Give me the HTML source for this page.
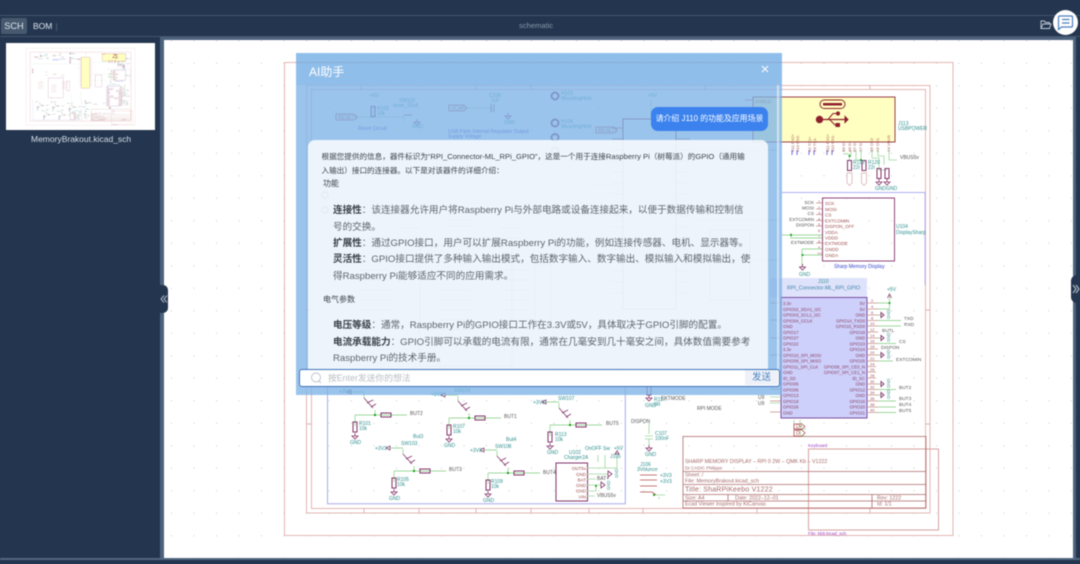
<!DOCTYPE html>
<html lang="zh"><head><meta charset="utf-8"><title>schematic</title>
<style>
html,body{margin:0;padding:0;width:1080px;height:564px;overflow:hidden;background:#24364f}
body{font-family:"Liberation Sans","Noto Sans CJK SC",sans-serif;position:relative}
.a{position:absolute;white-space:nowrap}
#wrap{position:absolute;left:0;top:0;width:1080px;height:564px;filter:blur(.4px)}
svg text{font-family:"Liberation Sans",sans-serif}
.r{fill:#a05050;font-size:5px}.t{fill:#2f8f8f;font-size:5px}.k{fill:#555;font-size:5px}.b{fill:#3344cc;font-size:5px}
.l{position:absolute;white-space:nowrap;font-size:9.6px;color:#5d646c;line-height:16px;left:333px}
.l b{color:#3a4048;font-weight:700}
.s{position:absolute;white-space:nowrap;font-size:7.6px;color:#3d4249;line-height:14px}
</style></head><body><div id="wrap">
<div class="a" style="left:0;top:15px;width:1080px;height:1px;background:#41546d"></div>
<div class="a" style="left:0;top:36px;width:1080px;height:1px;background:#41546d"></div>
<div class="a" style="left:1px;top:18px;width:26px;height:16px;background:#46596f;border-radius:2px;color:#dfe6ee;font-size:9.2px;line-height:16px;text-align:center">SCH</div>
<div class="a" style="left:33px;top:18px;color:#dfe6ee;font-size:8.5px;line-height:16px">BOM</div>
<div class="a" style="left:56px;top:23px;width:1px;height:8px;background:#46596f"></div>
<div class="a" style="left:519px;top:20px;color:#8696aa;font-size:7.6px;line-height:12px">schematic</div>
<div class="a" style="left:160px;top:37px;width:4px;height:521px;background:#4d627c"></div>
<div class="a" style="left:160px;top:37px;width:916px;height:3px;background:#4d627c"></div>
<div class="a" style="left:1073px;top:37px;width:3px;height:521px;background:#4d627c"></div>
<div class="a" style="left:0;top:558px;width:1080px;height:2px;background:#526781"></div>

<svg class="a" style="left:0;top:0" width="1080" height="564" viewBox="0 0 1080 564">
<defs>
<pattern id="dots" x="171" y="17.8" width="22.5" height="22.5" patternUnits="userSpaceOnUse"><rect width="1" height="1" fill="#c9c9c9"/></pattern>
<g id="res"><rect x="-2" y="-5" width="4" height="10" fill="none" stroke="#84346a" stroke-width="1"/></g>
<g id="hres"><rect x="-5" y="-2" width="10" height="4" fill="none" stroke="#84346a" stroke-width="1"/></g>
<g id="gnd"><path d="M0 0V3M-3 3H3L0 6Z" fill="none" stroke="#84346a" stroke-width=".8"/></g>
<g id="btn" fill="none">
<path d="M-20 0V11M-20 0H32M0 0V-5" stroke="#9ed79e" stroke-width=".9"/>
<path d="M-11 -22V-17M-24 -23H-11" stroke="#9ed79e" stroke-width=".9"/>
<path d="M-11 -17L-2 -7M-8 -12L-2 -15M-4 -8L1 -11" stroke="#84346a" stroke-width=".8"/>
<circle r="1.1" fill="#0a9a0a"/>
<use href="#hres" x="11" y="0"/><use href="#res" x="-20" y="12"/><use href="#gnd" x="-20" y="18"/>
<path d="M-28 -23L-24 -25V-21Z" stroke="#84346a" stroke-width=".7"/>
</g>
<g id="sch">
<g fill="none" stroke="#e2adad" stroke-width=".9">
<rect x="284.5" y="62.5" width="668.5" height="473"/>
<rect x="306.5" y="85.5" width="623.5" height="427.5"/>
<rect x="311.5" y="89.5" width="614" height="419"/>
<path d="M364 508V513M419 508V513M476 508V513M531 508V513M589 508V513M643 508V513M757 508V513M870 508V513M870 85V89M705 85V89M531 85V89M476 85V89M361 85V89M926 310H930M926 424H930M306 310H311M306 424H311"/>
<rect x="808.5" y="449" width="130" height="81" stroke="#d49a9a"/>
</g>
<g fill="none" stroke="#b06a6a" stroke-width=".8">
<rect x="683" y="436.5" width="243" height="71.5"/>
<path d="M683 471.5H926M683 484.500H926M683 494.500H926M683 501H926M728 494.500V501M872 494.500V508"/>
</g>
<g fill="#a76a6a" style="font-size:5.300px">
<text x="685" y="463">SHARP MEMORY DISPLAY – RPI 0 2W – QMK Kb – V1222</text>
<text x="685" y="469.500" style="font-size:4.500px">Dr CADIC Philippe</text>
<text x="685" y="476.500">Sheet: /</text><text x="685" y="482.500">File: MemoryBrakout.kicad_sch</text>
<text x="685" y="491.500" style="font-size:7px;letter-spacing:.2px">Title: ShaRPiKeebo V1222</text>
<text x="685" y="499.500">Size: A4</text><text x="735" y="499.500">Date: 2022–12–01</text><text x="877" y="499.500">Rev: 1222</text>
<text x="685" y="505.700">Ecad Viewer inspired by KiCanvas</text><text x="877" y="505.700">Id: 1/1</text>
</g>
<text x="808" y="447" fill="#a040c0" style="font-size:4.500px">Keyboard</text>
<text x="808" y="535" fill="#a040c0" style="font-size:4.500px">File: kb9.kicad_sch</text>
<!-- USB -->
<rect x="753" y="97" width="142" height="45" fill="#ffffc2" stroke="#8f2b3e" stroke-width=".9"/>
<text x="755" y="103" fill="#a05050" style="font-size:4.500px">SHIELD</text><path d="M745 100H753" stroke="#b05050" stroke-width=".7"/>
<rect x="820" y="100" width="25" height="8.500" rx="4.200" fill="none" stroke="#8f1f2c" stroke-width=".9"/>
<rect x="823" y="103" width="19" height="2.500" fill="#8f1f2c"/>
<g stroke="#8f1f2c" fill="#8f1f2c"><circle cx="819.500" cy="119.500" r="3.200"/><path d="M820 119.500H846" stroke-width="1.200"/><path d="M828 119.500L833 113.500H837M830 120L835 125H837" fill="none" stroke-width="1"/><path d="M845 116.500L848 119.500L845 122.500Z"/><circle cx="838" cy="113.500" r="1.600"/><rect x="836" y="123.500" width="3.500" height="3"/></g>
<text class="t" x="898" y="125">J113</text><text class="t" x="898" y="130">USBPOWER</text>
<g class="r" fill="#a05050" style="font-size:4px">
<text transform="translate(794,152)rotate(-90)">A11 RX2+</text><text transform="translate(799,152)rotate(-90)">A10 RX2-</text><text transform="translate(811,152)rotate(-90)">A2 TX1+</text><text transform="translate(816,152)rotate(-90)">A3 TX1-</text><text transform="translate(829,152)rotate(-90)">B11 RX1+</text><text transform="translate(834,152)rotate(-90)">B10 RX1-</text><text transform="translate(845,152)rotate(-90)">B6 D+</text><text transform="translate(851,152)rotate(-90)">A6 D+</text><text transform="translate(856,152)rotate(-90)">B7 D-</text><text transform="translate(862,152)rotate(-90)">A7 D-</text><text transform="translate(873,152)rotate(-90)">B5 CC2</text><text transform="translate(879,152)rotate(-90)">A5 CC1</text><text transform="translate(890,152)rotate(-90)">A4 VBUS</text>
</g>
<g fill="none" stroke="#9ed79e" stroke-width=".8"><path d="M843 154H849.500V161M851 150V156H849.500M856 150V160H861M861 150V160M872 150V158H879V170H887M878 150V156H884V165M889 150V160H897"/></g>
<circle cx="849.500" cy="156" r="1" fill="#0a9a0a"/><circle cx="861" cy="160" r="1" fill="#0a9a0a"/>
<use href="#res" x="849.500" y="165.500"/><use href="#res" x="864" y="165.500"/><use href="#res" x="879" y="173.500"/><use href="#res" x="887" y="173.500"/>
<use href="#gnd" x="879" y="179"/><use href="#gnd" x="887" y="179"/>
<path d="M847 173H852V183L849.500 185.500L847 183ZM861.500 173H866.500V183L864 185.500L861.500 183Z" fill="none" stroke="#d4a9a9" stroke-width=".7"/>
<text class="t" x="853" y="164">R119</text><text class="t" x="853" y="169">22r</text><text class="t" x="868" y="164">R120</text><text class="t" x="868" y="169">22r</text><text class="t" x="875" y="190">GNDGND</text><text class="k" x="900" y="159">VBUS5v</text>
<path d="M792 150V155M797 150V155M809 150V155M814 150V155M827 150V155M832 150V155" stroke="#4d4fd4" stroke-width=".8"/>
<!-- sharp -->
<path d="M782 192.500H925V285" fill="none" stroke="#aeb0f0" stroke-width=".9"/>
<rect x="822.500" y="198" width="72" height="63" fill="none" stroke="#84346a" stroke-width=".9"/>
<g class="k" style="font-size:4.700px" text-anchor="end"><text x="814" y="204">SCK</text><text x="814" y="209.500">MOSI</text><text x="814" y="215">CS</text><text x="814" y="221">EXTCOMIN</text><text x="814" y="226.500">DISPON</text><text x="814" y="244">EXTMODE</text></g>
<g class="r" style="font-size:4.600px"><text x="825" y="205">SCK</text><text x="825" y="211">MOSI</text><text x="825" y="216.500">CS</text><text x="825" y="222.500">EXTCOMIN</text><text x="825" y="228">DISPON_OFF</text><text x="825" y="234">VDDA</text><text x="825" y="239.500">VDDD</text><text x="825" y="245">EXTMODE</text><text x="825" y="251">GNDD</text><text x="825" y="257">GNDA</text></g>
<g style="font-size:4px" fill="#a05050"><text x="818" y="203">1</text><text x="818" y="209">2</text><text x="818" y="214.500">3</text><text x="818" y="220.500">4</text><text x="818" y="226">5</text><text x="818" y="232">6</text><text x="818" y="237.500">7</text><text x="818" y="243">8</text><text x="818" y="249">9</text><text x="817" y="255">10</text></g>
<path d="M816 203H822M816 209H822M816 214.500H822M816 220.500H822M816 226H822M816 243H822" stroke="#c98a8a" stroke-width=".7"/>
<path d="M782 235H822M791 233V238H822M802 249H822M802 255H822M802 249V265" fill="none" stroke="#9ed79e" stroke-width=".9"/>
<circle cx="791" cy="235" r="1" fill="#0a9a0a"/><circle cx="802.500" cy="255" r="1" fill="#0a9a0a"/>
<use href="#gnd" x="802.500" y="264"/><text class="t" x="799" y="276">GND</text>
<text x="834" y="268" class="b">Sharp Memory Display</text>
<text class="t" x="896" y="228">U104</text><text class="t" x="896" y="234">DisplaySharp</text>
<!-- J110 -->
<text x="818" y="283" class="t" style="font-size:5px">J110</text>
<text x="787" y="289.500" fill="#3e88a8" style="font-size:5.300px">RPI_Connector-ML_RPI_GPIO</text>
<rect x="781" y="297.500" width="86" height="120.500" fill="none" stroke="#7c4d9f" stroke-width="1"/>
<path d="M770 303H781M770 320H781M770 338H781M770 355H781M770 372H781M770 389H781M770 401H781M770 412H781" stroke="#c98a8a" stroke-width=".7"/>
<g fill="#8a3f60" style="font-size:4.300px">
<text x="783" y="305">3.3v</text><text x="783" y="311">GPIO02_SDA1_I2C</text><text x="783" y="316.500">GPIO03_SCL1_I2C</text><text x="783" y="322.300">GPIO04_GCLK</text><text x="783" y="328">GND</text><text x="783" y="333.800">GPIO17</text><text x="783" y="339.500">GPIO27</text><text x="783" y="345.300">GPIO22</text><text x="783" y="351">3.3v</text><text x="783" y="356.800">GPIO10_SPI_MOSI</text><text x="783" y="362.500">GPIO09_SPI_MISO</text><text x="783" y="368.300">GPIO11_SPI_CLK</text><text x="783" y="374">GND</text><text x="783" y="379.800">ID_SD</text><text x="783" y="385.500">GPIO05</text><text x="783" y="391.300">GPIO06</text><text x="783" y="397">GPIO13</text><text x="783" y="402.800">GPIO19</text><text x="783" y="408.500">GPIO26</text><text x="783" y="414.300">GND</text>
</g>
<g fill="#8a3f60" style="font-size:4.300px" text-anchor="end">
<text x="865" y="305">5V</text><text x="865" y="311">5V</text><text x="865" y="316.500">GND</text><text x="865" y="322.300">GPIO14_TXD0</text><text x="865" y="328">GPIO15_RXD0</text><text x="865" y="333.800">GPIO18</text><text x="865" y="339.500">GND</text><text x="865" y="345.300">GPIO23</text><text x="865" y="351">GPIO24</text><text x="865" y="356.800">GND</text><text x="865" y="362.500">GPIO25</text><text x="865" y="368.300">GPIO08_SPI_CE0_N</text><text x="865" y="374">GPIO07_SPI_CE1_N</text><text x="865" y="379.800">ID_SC</text><text x="865" y="385.500">GND</text><text x="865" y="391.300">GPIO12</text><text x="865" y="397">GND</text><text x="865" y="402.800">GPIO16</text><text x="865" y="408.500">GPIO20</text><text x="865" y="414.300">GPIO21</text>
</g>
<g fill="none" stroke="#c98a8a" stroke-width=".7"><path d="M867 303H878M867 309H878M867 315H878M867 320.500H878M867 326H878M867 332H878M867 338H878M867 343.500H878M867 349H878M867 355H878M867 361H878M867 366.500H876M867 372H876M867 378H876M867 384H878M867 389.500H878M867 395H878M867 401H878M867 407H878M867 412.500H878"/></g>
<g fill="none" stroke="#9ed79e" stroke-width=".9"><path d="M878 303H889.500V293M878 309H889.500V303M878 320.500H901M878 326H901M878 343.500H896M878 361H893M878 389.500H896M878 401H896M878 407H896M878 412.500H896M878 315H881M878 338H881M878 355H881M878 384H881M878 395H881"/></g>
<circle cx="889.500" cy="303" r="1" fill="#0a9a0a"/>
<path d="M889.500 294L887.500 298M889.500 294L891.500 298" stroke="#84346a" stroke-width=".8"/>
<path d="M881 312.500L884 315L881 317.500ZM881 335.500L884 338L881 340.500ZM881 352.500L884 355L881 357.500ZM881 381.500L884 384L881 386.500ZM881 392.500L884 395L881 397.500Z" fill="none" stroke="#84346a" stroke-width=".9"/>
<text class="t" x="887" y="291">+5V</text>
<g class="t" style="font-size:4.200px"><text transform="translate(890,319)rotate(-90)">GND</text><text transform="translate(890,342)rotate(-90)">GND</text><text transform="translate(890,359)rotate(-90)">GND</text><text transform="translate(890,388)rotate(-90)">GND</text><text transform="translate(890,399)rotate(-90)">GND</text></g>
<g class="k" style="font-size:4.800px"><text x="904" y="320">TXD</text><text x="904" y="326">RXD</text><text x="882" y="332">BUTL</text><text x="899" y="343">CS</text><text x="881" y="349">DISPON</text><text x="896" y="361">EXTCOMIN</text><text x="899" y="389">BUT2</text><text x="899" y="400">BUT3</text><text x="899" y="406">BUT4</text><text x="899" y="412">BUT5</text></g>
<g style="font-size:4px" fill="#a05050"><text x="871" y="302">2</text><text x="871" y="308">4</text><text x="871" y="314">6</text><text x="871" y="319.500">8</text><text x="870" y="325">10</text><text x="870" y="331">12</text><text x="870" y="337">14</text><text x="870" y="342.500">16</text><text x="870" y="348">18</text><text x="870" y="354">20</text><text x="870" y="360">22</text><text x="870" y="365.500">24</text><text x="870" y="371">26</text><text x="870" y="377">28</text><text x="870" y="383">30</text><text x="870" y="388.500">32</text><text x="870" y="394">34</text><text x="870" y="400">36</text><text x="870" y="406">38</text><text x="870" y="411.500">40</text></g>
<!-- below J110 -->
<path d="M794 420V429H806M800 420V436H806" fill="none" stroke="#9ed79e" stroke-width=".8"/>
<path d="M794 424H802L805 426.500L802 429H794ZM794 430H802L805 433L802 436H794Z" fill="none" stroke="#b05050" stroke-width=".8"/>
<text x="796" y="428" fill="#a05050" style="font-size:5px">D+</text><text x="796" y="434.500" fill="#a05050" style="font-size:5px">D-</text>
<text class="k" x="758" y="399">U9</text><text class="k" x="758" y="405">U9</text>
<path d="M770 397H781M770 403H781" stroke="#9ed79e" stroke-width=".8"/>
<text class="k" x="661" y="400">EXTMODE</text><text class="k" x="631" y="423">DISPON</text><text class="k" x="697" y="410">RPI MODE</text>
<use href="#res" x="649" y="390"/><use href="#gnd" x="649" y="395"/><text class="t" x="645" y="407">GND</text>
<text class="t" x="654" y="401">R117</text><text class="t" x="654" y="406">0R</text>
<path d="M649 422V434M645 436H653M645 439H653M649 439V445" fill="none" stroke="#9ed79e" stroke-width=".8"/><use href="#gnd" x="649" y="445"/>
<text class="t" x="655" y="435">C107</text><text class="t" x="655" y="440">100nF</text><text class="t" x="645" y="456">GND</text>
<g class="t"><text x="660" y="477">+3V3</text><text x="660" y="483">+3V3</text></g>
<text class="t" x="640" y="466">J106</text><text class="t" x="637" y="471">3Volunce</text>
<path d="M640 475H657M640 480H657M640 486H657M640 492H652L656 495" stroke="#b05050" stroke-width=".8" fill="none"/>
<circle cx="654" cy="495" r="1" fill="#0a9a0a"/><path d="M656 495H665M659 499V497" stroke="#9ed79e" stroke-width=".8"/>
<!-- button frame -->
<path d="M327.500 380V503.800H625.300V380" fill="none" stroke="#a9abee" stroke-width="1"/>
<use href="#btn" x="375" y="415"/><use href="#btn" x="469" y="418"/><use href="#btn" x="570" y="425"/><use href="#btn" x="414" y="471"/><use href="#btn" x="508" y="473"/>
<g class="t">
<text x="339" y="393">+3V3</text><text x="431" y="396">+3V3</text><text x="533" y="404">+3V3</text><text x="375" y="450">+3V3</text><text x="470" y="452">+3V3</text>
<text x="359" y="425">R101</text><text x="359" y="430">10k</text><text x="453" y="428">R107</text><text x="453" y="433">10k</text><text x="555" y="436">R113</text><text x="555" y="441">10k</text><text x="397" y="481">R105</text><text x="397" y="486">10k</text><text x="491" y="483">R109</text><text x="491" y="488">10k</text>
<text x="350" y="444">GND</text><text x="444" y="447">GND</text><text x="547" y="454">GND</text><text x="389" y="500">GND</text><text x="483" y="502">GND</text>
<text x="558" y="400">SW107</text><text x="401" y="445">SW103</text><text x="495" y="448">SW108</text><text x="413" y="438" >But3</text><text x="506" y="441">But4</text>
<text x="454" y="392">SW104</text>
</g>
<g class="k" style="font-size:5px"><text x="410" y="415">BUT2</text><text x="504" y="418">BUT1</text><text x="606" y="425">BUT5</text><text x="449" y="471">BUT3</text><text x="543" y="474">BUT4</text></g>
<!-- charger -->
<rect x="556" y="463" width="31.500" height="38" fill="none" stroke="#84346a" stroke-width="1"/>
<g fill="#a05050" style="font-size:4.500px" text-anchor="end"><text x="586" y="470">OUT5v</text><text x="586" y="476">GND</text><text x="586" y="481.500">BAT</text><text x="586" y="487">GND</text><text x="586" y="492.500">GND</text><text x="586" y="498.500">VIN</text></g>
<path d="M587 468H617V456M605 455V468M598 455V462M587 474H608M587 479H596M587 485H601M596 485V491H587M587 496H595" fill="none" stroke="#9ed79e" stroke-width=".8"/>
<path d="M608 471L612 474L608 477ZM601 482L605 485L601 488ZM615 454L617 451L619 454Z" fill="none" stroke="#84346a" stroke-width=".8"/>
<circle cx="596" cy="486" r="1" fill="#0a9a0a"/>
<text class="t" x="569" y="454">U102</text><text class="t" x="564" y="459">Charger2A</text><text class="t" x="585" y="450">OnOFF Sw</text><text class="t" x="614" y="450">+5V</text><text class="t" x="610" y="458">J105</text>
<g class="t" style="font-size:4.200px"><text transform="translate(618,478)rotate(-90)">GND</text><text transform="translate(610,490)rotate(-90)">GND</text></g>
<text class="k" x="597" y="480">BAT+</text><text class="k" x="597" y="497">VBUS5v</text>
<!-- top left under modal -->
<g stroke="#9ed79e" stroke-width=".8" fill="none"><path d="M357 117H404M373 117V108M404 117V121M465 108H492M492 108V112M651 120V100"/></g>
<use href="#res" x="373" y="111.500"/><use href="#gnd" x="417" y="119"/><use href="#gnd" x="508" y="113"/>
<path d="M336 114H354L357 117L354 120H336ZM449 105H464L467 108L464 111H449ZM596 127H614L617 130L614 133H596Z" fill="none" stroke="#b05050" stroke-width=".8"/>
<text x="338" y="119" class="r">RESET1</text><text x="451" y="110" class="r">UCAP</text><text x="598" y="132" class="r">RESET1</text>
<g class="t"><text x="370" y="97">+5V</text><text x="377" y="110">R102</text><text x="377" y="115">10k</text><text x="399" y="102">SW102</text><text x="393" y="107">reset_32u4</text><text x="489" y="97">C106</text><text x="491" y="102">1uF</text><text x="504" y="124">GND</text><text x="412" y="128">GND</text><text x="561" y="95">H103</text><text x="561" y="100">MountingHole</text><text x="561" y="123">H104</text><text x="561" y="128">MountingHole</text><text x="648" y="97">+5V</text></g>
<g class="b"><text x="358" y="130">Reset Circuit</text><text x="448" y="133">USB Pads Internal Regulator Output</text><text x="448" y="138">Supply Voltage</text></g>
<path d="M491 104V112M494 104V112M404 115H412" stroke="#84346a" stroke-width=".8"/>
<g fill="none" stroke="#84346a" stroke-width="2"><circle cx="555" cy="96" r="3.500"/><circle cx="555" cy="123" r="3.500"/><circle cx="555" cy="137.500" r="3.500"/><circle cx="555" cy="151" r="3.500"/><circle cx="325" cy="195" r="3"/><circle cx="325" cy="210" r="3"/></g>
<rect x="623" y="119" width="53" height="190" fill="none" stroke="#8f2b3e" stroke-width=".9"/>
<g fill="none" stroke="#b05050" stroke-width=".7"><path d="M612 128H623M612 139H623M612 150H623M612 161H623M612 172H623M612 183H623M612 194H623M612 205H623M612 216H623M612 227H623M612 238H623M612 249H623M612 260H623M612 271H623M612 282H623M612 293H623M676 128H690M676 139H690M676 150H690M676 161H690M676 172H690M676 183H690M676 194H690M676 205H690M676 216H690M676 227H690M676 238H690M676 249H690M676 260H690M676 271H690M676 282H690M676 293H690M500 228H520M500 238H520M448 220H470M448 226H470M400 210H420M400 228H420M440 290H470M440 300H470M440 310H470M440 320H470M440 330H470M360 270H390M360 280H390M360 290H390M360 300H390M360 310H390M505 270H530M505 280H530M505 290H530M505 300H530M505 310H530"/></g>
<g fill="none" stroke="#84346a" stroke-width=".8"><rect x="420" y="246" width="92" height="120"/><rect x="535" y="265" width="16" height="60"/><rect x="710" y="230" width="40" height="70"/></g>
<g fill="none" stroke="#9ed79e" stroke-width=".8"><path d="M320 160H620M590 185H621M690 150H778M690 220H778M690 260H778M440 360V382M560 342V382M620 330V382"/></g>
</g>
</defs>
<rect x="164" y="40" width="909" height="518" fill="#fff"/>
<rect x="164" y="40" width="909" height="518" fill="url(#dots)"/>
<rect x="770" y="278" width="97" height="19.500" fill="#dfe2fb"/>
<rect x="781" y="297.500" width="86" height="120.500" fill="#cdd0fb"/>
<svg x="164" y="40" width="909" height="518" viewBox="164 40 909 518"><use href="#sch"/></svg>
<rect x="6" y="43" width="149" height="87" fill="#fff"/>
<svg x="6" y="43" width="149" height="87" viewBox="6 43 149 87"><g transform="translate(-20.300,37.900) scale(.163)"><rect x="623" y="119" width="53" height="190" fill="#ffffc2"/><use href="#sch"/></g></svg>
</svg>
<div class="a" style="left:31px;top:133px;color:#d7dee6;font-size:8.5px;line-height:12px">MemoryBrakout.kicad_sch</div>

<!-- handles -->
<div class="a" style="left:160px;top:285px;width:8px;height:28px;background:#24364f;border-radius:0 5px 5px 0"></div>
<svg class="a" style="left:160px;top:294px" width="8" height="10" viewBox="0 0 8 10" fill="none" stroke="#a9b5c3" stroke-width="1"><path d="M4 1.500L1 5L4 8.500M7 1.500L4 5L7 8.500"/></svg>
<div class="a" style="left:1071px;top:275px;width:9px;height:28px;background:#24364f;border-radius:6px 0 0 6px"></div>
<svg class="a" style="left:1071px;top:283px" width="9" height="12" viewBox="0 0 9 12" fill="none" stroke="#a9b5c3" stroke-width="1.200"><path d="M2 2L5 6L2 10M5 2L8 6L5 10"/></svg>
<!-- top right -->
<svg class="a" style="left:1040px;top:19px" width="12" height="11" viewBox="0 0 12 11" fill="none" stroke="#c3ccd6" stroke-width=".9"><path d="M1 9.500V2H4.500L5.500 3.500H9.500V5M1 9.500H9.500L11 5H3L1 9.500Z"/></svg>
<div class="a" style="left:1053px;top:10px;width:25px;height:25px;border-radius:50%;background:#fff"></div>
<svg class="a" style="left:1057px;top:15px" width="17" height="16" viewBox="0 0 17 16" fill="none" stroke="#4b80bf" stroke-width="1.200"><path d="M3 1H14.500Q15.500 1 15.500 2V11Q15.500 12 14.500 12H4.500L1.500 14.500V2Q1.500 1 3 1ZM5 4.500H12.500M5 8H12.500"/></svg>

<!-- modal -->
<div class="a" style="left:296px;top:53px;width:486px;height:342px;background:rgba(109,170,227,.76)"></div>
<div class="a" style="left:296px;top:85px;width:486px;height:310px;background:rgba(255,255,255,.1)"></div>
<div class="a" style="left:309px;top:64px;color:#fff;font-size:12px;line-height:16px">AI助手</div>
<svg class="a" style="left:761px;top:65px" width="8" height="8" viewBox="0 0 8 8" stroke="#fff" stroke-width="1"><path d="M1 1L7 7M7 1L1 7"/></svg>
<div class="a" style="left:777px;top:85px;width:2px;height:284px;background:rgba(255,255,255,.55)"></div>
<div class="a" style="left:651px;top:106.500px;width:117px;height:24.500px;background:#3b82ee;border-radius:7px;color:#fff;font-size:7.9px;line-height:24.500px;text-align:center">请介绍 J110 的功能及应用场景</div>
<div class="a" style="left:308px;top:140px;width:460px;height:230px;background:rgba(255,255,255,.82);border-radius:7px 7px 0 0"></div>
<div class="s" style="left:321.500px;top:150px">根据您提供的信息，器件标识为“RPI_Connector-ML_RPi_GPIO”，这是一个用于连接Raspberry Pi（树莓派）的GPIO（通用输</div>
<div class="s" style="left:321.500px;top:164px">入输出）接口的连接器。以下是对该器件的详细介绍：</div>
<div class="s" style="left:323px;top:177px;font-size:8px">功能</div>
<div class="l" style="top:203px"><b>连接性</b>：该连接器允许用户将Raspberry Pi与外部电路或设备连接起来，以便于数据传输和控制信</div>
<div class="l" style="top:220px">号的交换。</div>
<div class="l" style="top:236px"><b>扩展性</b>：通过GPIO接口，用户可以扩展Raspberry Pi的功能，例如连接传感器、电机、显示器等。</div>
<div class="l" style="top:252px"><b>灵活性</b>：GPIO接口提供了多种输入输出模式，包括数字输入、数字输出、模拟输入和模拟输出，使</div>
<div class="l" style="top:269px">得Raspberry Pi能够适应不同的应用需求。</div>
<div class="s" style="left:323px;top:293px;font-size:8px">电气参数</div>
<div class="l" style="top:318px"><b>电压等级</b>：通常，Raspberry Pi的GPIO接口工作在3.3V或5V，具体取决于GPIO引脚的配置。</div>
<div class="l" style="top:335px"><b>电流承载能力</b>：GPIO引脚可以承载的电流有限，通常在几毫安到几十毫安之间，具体数值需要参考</div>
<div class="l" style="top:351px">Raspberry Pi的技术手册。</div>
<div class="a" style="left:299px;top:369px;width:479px;height:16px;background:#fff;border:1px solid #3f72b8;border-radius:3px"></div>
<svg class="a" style="left:310px;top:372px" width="12" height="12" viewBox="0 0 12 12" fill="none" stroke="#b9c0c8" stroke-width=".9"><circle cx="6" cy="5.500" r="4.500"/><path d="M9 9L11 11"/></svg>
<div class="a" style="left:328px;top:371px;color:#b8bdc4;font-size:8.800px;line-height:14px">按Enter发送你的想法</div>
<div class="a" style="left:745px;top:370px;width:33px;height:15px;background:#eef2f8;color:#4a80c0;font-size:9.500px;line-height:15px;text-align:center">发送</div>
</div></body></html>
